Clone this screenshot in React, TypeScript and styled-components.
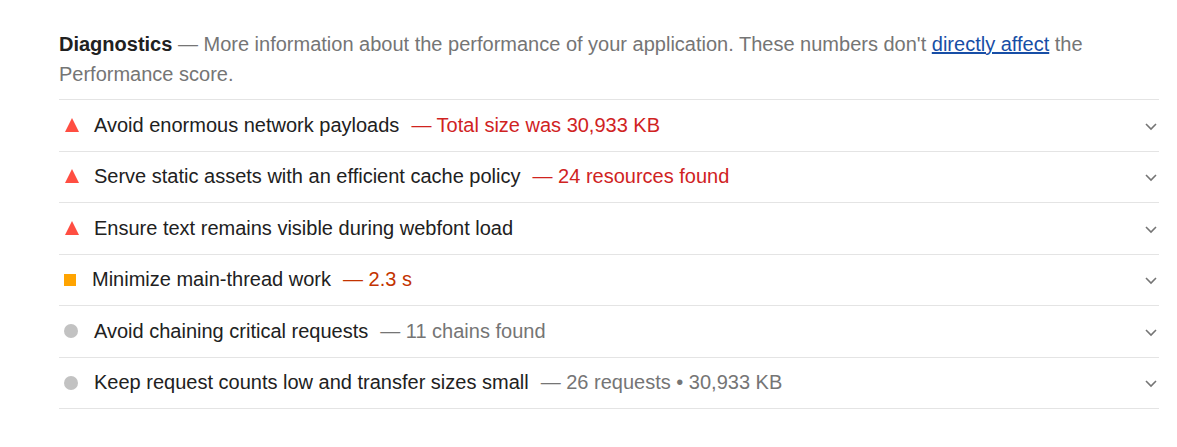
import styled, { createGlobalStyle } from "styled-components";

const GlobalStyle = createGlobalStyle`
  body {
    margin: 0;
    background: #ffffff;
    font-family: "Liberation Sans", Arial, sans-serif;
  }
`;

const Page = styled.div`
  padding: 29px 0 0 59px;
`;

const Section = styled.section`
  width: 1100px;
`;

const Description = styled.div`
  font-size: 20px;
  line-height: 30px;
  color: #757575;
  margin-bottom: 10px;
`;

const Title = styled.span`
  font-weight: 700;
  color: #212121;
`;

const Link = styled.a`
  color: #174ea6;
  text-decoration: underline;
`;

const List = styled.div`
  border-bottom: 1px solid #e4e4e4;
`;

const Row = styled.div`
  display: flex;
  align-items: center;
  height: 50.5px;
  border-top: 1px solid #e4e4e4;
  font-size: 20px;
  color: #212121;
`;

type Rating = "fail" | "average" | "info";

const Triangle = styled.span`
  width: 0;
  height: 0;
  margin: 0 15px 1px 6px;
  border-left: 7px solid transparent;
  border-right: 7px solid transparent;
  border-bottom: 14px solid #ff4e42;
`;

const Square = styled.span`
  width: 12px;
  height: 12px;
  margin: 0 16px 0 5px;
  background: #ffa400;
`;

const Circle = styled.span`
  width: 14px;
  height: 14px;
  margin: 0 16px 0 5px;
  border-radius: 50%;
  background: #c2c2c2;
`;

const Name = styled.span`
  white-space: nowrap;
`;

const Value = styled.span<{ $rating: Rating }>`
  margin-left: 12px;
  white-space: nowrap;
  color: ${(p) =>
    p.$rating === "fail" ? "#d0231f" : p.$rating === "average" ? "#c33300" : "#757575"};
`;

const Chevron = styled.svg`
  margin-left: auto;
  margin-right: 2px;
  margin-top: 3px;
`;

const audits: { rating: Rating; name: string; value?: string }[] = [
  { rating: "fail", name: "Avoid enormous network payloads", value: "Total size was 30,933 KB" },
  { rating: "fail", name: "Serve static assets with an efficient cache policy", value: "24 resources found" },
  { rating: "fail", name: "Ensure text remains visible during webfont load" },
  { rating: "average", name: "Minimize main-thread work", value: "2.3 s" },
  { rating: "info", name: "Avoid chaining critical requests", value: "11 chains found" },
  { rating: "info", name: "Keep request counts low and transfer sizes small", value: "26 requests • 30,933 KB" },
];

const ScoreIcon = ({ rating }: { rating: Rating }) =>
  rating === "fail" ? <Triangle /> : rating === "average" ? <Square /> : <Circle />;

export default function App() {
  return (
    <Page>
      <GlobalStyle />
      <Section>
        <Description>
          <Title>Diagnostics</Title> — More information about the performance of your application.
          These numbers don't <Link href="#">directly affect</Link> the Performance score.
        </Description>
        <List>
          {audits.map((a) => (
            <Row key={a.name}>
              <ScoreIcon rating={a.rating} />
              <Name>{a.name}</Name>
              {a.value && <Value $rating={a.rating}>— {a.value}</Value>}
              <Chevron width="12" height="8" viewBox="0 0 12 8">
                <polyline points="1,1 6,6 11,1" fill="none" stroke="#757575" strokeWidth="1.6" />
              </Chevron>
            </Row>
          ))}
        </List>
      </Section>
    </Page>
  );
}
